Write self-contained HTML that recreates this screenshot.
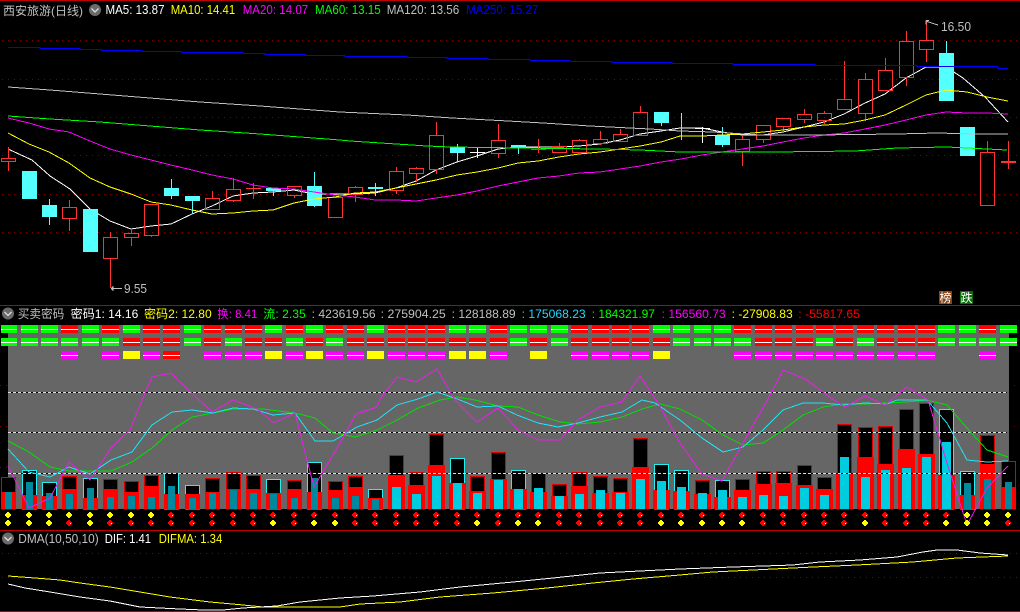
<!DOCTYPE html>
<html lang="zh">
<head>
<meta charset="utf-8">
<title>西安旅游(日线)</title>
<style>
html,body{margin:0;padding:0;background:#000}
svg{display:block}
text{font-family:"Liberation Sans","Noto Sans CJK SC",sans-serif;font-size:12.5px}
.c{font-size:12px}
.s{shape-rendering:crispEdges;fill:none}
</style>
</head>
<body>
<svg width="1020" height="612" viewBox="0 0 1020 612" xmlns="http://www.w3.org/2000/svg">
<defs>
<g id="r" style="shape-rendering:crispEdges"><path fill="#f00" d="M-1-3h2v1h1v1h1v2h-1v1h-1v1h-2v-1h-1v-1h-1v-2h1v-1h1z"/><rect x="1" y="0" width="1" height="1" fill="#fff"/></g>
<path id="y" style="shape-rendering:crispEdges" fill="#ff0" d="M-1-3h2v1h1v1h1v2h-1v1h-1v1h-2v-1h-1v-1h-1v-2h1v-1h1z"/>
</defs>
<rect width="1020" height="612" fill="#000"/>

<!-- separators -->
<g class="s" stroke="#c00000">
<path d="M0 .5h1020M0 305.5h1020M0 530.5h1020M0 611.5h1020"/>
</g>

<!-- main grid -->
<g class="s" stroke="#860000" stroke-dasharray="1 5">
<path d="M2 40.5H1020M2 79.5H1020M2 117.5H1020M2 155.5H1020M2 194.5H1020M2 232.5H1020"/>
<path d="M0 385.5H1020M0 426.5H1020M0 467.5H1020M2 553.5H1020M2 577.5H1020"/>
</g>

<!-- MA5 behind candles -->
<polyline class="s" stroke="#fff" points="8,149 32,160 50,176 70,189 90,209 110,221 131,229 151,226 171,224 192,214 212,206 233,196 253,193 273,192 294,190 314,194 340,194 355,194 375,193 396,188 416,181 436,170 457,162 477,156 498,149 518,147 538,147 559,147 579,146 600,144 620,140 640,134 661,131 680,128 702,128 722,132 742,135 763,135 783,132 804,127 824,122 844,114 865,103 885,94 906,78 926,67 946,67 963,78 985,97 1008,122"/>

<!-- candles -->
<path class="s" stroke="#ff3232" d="M1.5 158.5h14v3h-14zM8.5 147V158M8.5 162V171M62.5 207.5h14v11h-14zM69.5 200V207M69.5 219V231M103.5 237.5h14v21h-14zM110.5 232V237M110.5 259V288M124.5 233.5h14v4h-14zM131.5 228V233M131.5 238V246M144.5 204.5h14v31h-14zM151.5 236V237M205.5 198.5h14v11h-14zM212.5 191V198M226.5 189.5h14v11h-14zM233.5 178V189M233.5 201V202M287.5 186.5h14v9h-14zM294.5 196V198M328.5 197.5h14v20h-14zM348.5 187.5h14v7h-14zM355.5 186V187M355.5 195V202M389.5 171.5h14v19h-14zM396.5 167V171M396.5 191V194M409.5 168.5h14v5h-14zM416.5 167V168M416.5 174V182M429.5 135.5h14v34h-14zM436.5 122V135M436.5 170V174M491.5 140.5h14v13h-14zM498.5 124V140M498.5 154V158M552.5 146.5h14v6h-14zM559.5 143V146M572.5 140.5h14v12h-14zM579.5 139V140M593.5 139.5h14v4h-14zM600.5 131V139M600.5 144V145M613.5 134.5h14v7h-14zM620.5 129V134M633.5 112.5h14v23h-14zM640.5 106V112M735.5 139.5h14v12h-14zM742.5 135V139M742.5 152V166M756.5 125.5h14v14h-14zM763.5 140V143M776.5 118.5h14v8h-14zM783.5 127V132M797.5 114.5h14v5h-14zM804.5 109V114M804.5 120V123M817.5 113.5h14v7h-14zM824.5 111V113M824.5 121V124M837.5 99.5h14v10h-14zM844.5 61V99M858.5 79.5h14v34h-14zM865.5 73V79M865.5 114V121M878.5 70.5h14v20h-14zM885.5 58V70M899.5 41.5h14v36h-14zM906.5 31V41M906.5 78V86M919.5 40.5h14v9h-14zM926.5 21V40M926.5 50V62M980.5 152.5h14v53h-14zM987.5 141V152M246 188.5h15M253.5 183V199M531 149.5h15M538.5 139V153M1001 161.5h15M1001 162.5h15M1008.5 141V169"/>
<path class="s" stroke="#54ffff" d="M49.5 199V225M171.5 179V199M192.5 196V214M273.5 188V196M314.5 172V207M375.5 183V196M457.5 144V161M518.5 145V154M661.5 112V126M681.5 113V140M722.5 127V147M946.5 41V53"/>
<path style="shape-rendering:crispEdges" fill="#54ffff" d="M22 171h15v28h-15zM42 205h15v12h-15zM83 209h15v43h-15zM164 188h15v8h-15zM185 196h15v5h-15zM266 188h15v3h-15zM307 186h15v20h-15zM368 187h15v2h-15zM450 147h15v6h-15zM511 145h15v3h-15zM654 112h15v11h-15zM715 135h15v10h-15zM939 53h15v48h-15zM960 127h15v29h-15z"/>
<path class="s" stroke="#fff" d="M470 152.5h15M477.5 148V158M695 128.5h15M702.5 127V143"/>

<!-- other MAs -->
<g class="s">
<polyline stroke="#ff0" points="8,133 29,144 49,152 69,163 90,178 110,187 131,194 151,202 171,205 192,210 212,214 233,213 253,211 273,210 294,203 314,199 335,197 355,193 375,192 396,188 416,184 436,180 457,175 477,172 498,168 518,163 538,161 559,157 579,154 600,152 620,149 640,146 661,142 680,136 702,136 722,135 742,134 763,132 783,130 804,127 824,125 844,124 865,120 885,115 906,105 926,95 946,90 967,92 987,97 1008,101"/>
<polyline stroke="#f0f" points="8,118 29,123 49,129 69,132 90,141 110,149 131,155 151,160 171,165 192,170 212,175 233,179 253,185 273,188 294,189 314,192 335,195 355,197 375,200 396,200 416,201 436,198 457,195 477,191 498,186 518,182 538,178 559,176 579,173 600,172 620,169 640,166 661,162 681,159 702,155 722,152 742,149 763,146 783,142 804,138 824,135 844,133 865,129 885,125 906,120 926,115 946,112 967,113 987,113 1008,114"/>
<polyline stroke="#0f0" points="8,116 50,119 100,122 150,126 200,130 260,134 340,140 350,141 427,146 450,147 520,148 600,149 640,150 680,152 713,152 773,152 855,151 897,148 947,147 1007,150"/>
<polyline stroke="#c0c0c0" points="8,87 50,90 100,94 150,98 200,102 260,106 340,112 407,115 452,118 508,121 543,123 590,126 650,129 680,131 713,132 760,135 815,135 897,134 937,133 977,134 1008,134"/>
<path stroke="#00f" d="M8 47.5H40V48.5H80V49.5H102V50.5H142V51.5H182V52.5H243V53.5H265V54.5H305V55.5H345V56.5H407V57.5H447V58.5H488V59.5H530V60.5H570V61.5H612V62.5H672V63.5H733V64.5H815V65.5H917V66.5H998V68.5H1008"/>
</g>

<!-- price labels -->
<path class="s" stroke="#c0c0c0" d="M926 20.5h3M926 20.5v4M927 21.5L938 25M111 288.5H122M113 286v5M112 287v3"/>
<text x="941" y="31" textLength="30" lengthAdjust="spacingAndGlyphs" fill="#c0c0c0">16.50</text>
<text x="124" y="293" textLength="23" lengthAdjust="spacingAndGlyphs" fill="#c0c0c0">9.55</text>

<!-- main header -->
<text class="c" x="3" y="15" textLength="80" lengthAdjust="spacingAndGlyphs" fill="#c0c0c0">西安旅游(日线)</text>
<circle cx="95" cy="10" r="6" fill="#6a6a6a"/><path d="M91.5 8.5L95 12L98.5 8.5" stroke="#ddd" stroke-width="1.3" fill="none"/>
<text x="105.5" y="14" textLength="59" lengthAdjust="spacingAndGlyphs" fill="#fff">MA5: 13.87</text>
<text x="170.7" y="14" textLength="64.5" lengthAdjust="spacingAndGlyphs" fill="#ff0">MA10: 14.41</text>
<text x="242.7" y="14" textLength="65.5" lengthAdjust="spacingAndGlyphs" fill="#f0f">MA20: 14.07</text>
<text x="315" y="14" textLength="65.7" lengthAdjust="spacingAndGlyphs" fill="#0f0">MA60: 13.15</text>
<text x="386.7" y="14" textLength="72.6" lengthAdjust="spacingAndGlyphs" fill="#c0c0c0">MA120: 13.56</text>
<text x="466" y="14" textLength="72.3" lengthAdjust="spacingAndGlyphs" fill="#00f">MA250: 15.27</text>

<!-- badges -->
<rect x="939" y="291" width="13" height="13" fill="#8b4513"/>
<rect x="960" y="291" width="13" height="13" fill="#0b6b0b"/>
<text class="c" x="939.5" y="302" textLength="12" lengthAdjust="spacingAndGlyphs" fill="#fff">榜</text>
<text class="c" x="960.5" y="302" textLength="12" lengthAdjust="spacingAndGlyphs" fill="#fff">跌</text>

<!-- panel 2 header -->
<circle cx="8" cy="313.5" r="6" fill="#6a6a6a"/><path d="M4.5 312L8 315.5L11.5 312" stroke="#ddd" stroke-width="1.3" fill="none"/>
<text class="c" x="17.7" y="318" textLength="46.6" lengthAdjust="spacingAndGlyphs" fill="#c0c0c0">买卖密码</text>
<text class="c" x="70.7" y="318" textLength="67.6" lengthAdjust="spacingAndGlyphs" fill="#fff">密码1: 14.16</text>
<text class="c" x="144" y="318" textLength="67.7" lengthAdjust="spacingAndGlyphs" fill="#ff0">密码2: 12.80</text>
<text class="c" x="217.3" y="318" textLength="40" lengthAdjust="spacingAndGlyphs" fill="#f0f">换: 8.41</text>
<text class="c" x="263.3" y="318" textLength="42.4" lengthAdjust="spacingAndGlyphs" fill="#0f0">流: 2.35</text>
<text class="c" x="311.7" y="318" textLength="64" lengthAdjust="spacingAndGlyphs" fill="#c0c0c0">: 423619.56</text>
<text class="c" x="380.7" y="318" textLength="65" lengthAdjust="spacingAndGlyphs" fill="#c0c0c0">: 275904.25</text>
<text class="c" x="451.7" y="318" textLength="64" lengthAdjust="spacingAndGlyphs" fill="#c0c0c0">: 128188.89</text>
<text class="c" x="521.7" y="318" textLength="64" lengthAdjust="spacingAndGlyphs" fill="#22d8ff">: 175068.23</text>
<text class="c" x="591.7" y="318" textLength="63.3" lengthAdjust="spacingAndGlyphs" fill="#0f0">: 184321.97</text>
<text class="c" x="661.7" y="318" textLength="64" lengthAdjust="spacingAndGlyphs" fill="#f0f">: 156560.73</text>
<text class="c" x="731.7" y="318" textLength="61" lengthAdjust="spacingAndGlyphs" fill="#ff0">: -27908.83</text>
<text class="c" x="798.3" y="318" textLength="61.7" lengthAdjust="spacingAndGlyphs" fill="#f00">: -55817.65</text>

<!-- panel 2 -->
<rect x="8" y="325" width="1001" height="184" fill="#666" style="shape-rendering:crispEdges"/>

<!-- signal rows -->
<g class="s" stroke-width="8">
<path stroke="#f00" d="M61 329h17M102 329h17M143 329h17M163 329h17M204 329h17M225 329h17M245 329h17M286 329h17M326 329h17M347 329h17M388 329h17M408 329h17M428 329h17M490 329h17M571 329h17M592 329h17M612 329h17M632 329h17M734 329h17M755 329h17M775 329h17M796 329h17M816 329h17M836 329h17M857 329h17M877 329h17M898 329h17M918 329h17M979 329h17M123 342h17M143 342h17M163 342h17M204 342h17M245 342h17M265 342h17M306 342h17M347 342h17M367 342h17M388 342h17M408 342h17M428 342h17M449 342h17M469 342h17M490 342h17M530 342h17M571 342h17M592 342h17M612 342h17M632 342h17M653 342h17M755 342h17M775 342h17M796 342h17M836 342h17M877 342h17M898 342h17M918 342h17M163 355h17"/>
<path stroke="#0f0" d="M1 329h16M21 329h17M41 329h17M82 329h17M123 329h17M184 329h17M265 329h17M306 329h17M367 329h17M449 329h17M469 329h17M510 329h17M530 329h17M551 329h17M653 329h17M673 329h17M694 329h17M714 329h17M938 329h17M959 329h17M1000 329h17M1 342h16M21 342h17M41 342h17M61 342h17M82 342h17M102 342h17M184 342h17M225 342h17M286 342h17M326 342h17M510 342h17M551 342h17M673 342h17M694 342h17M714 342h17M734 342h17M816 342h17M857 342h17M938 342h17M959 342h17M979 342h17M1000 342h17"/>
<path stroke="#f0f" d="M61 355h17M102 355h17M143 355h17M204 355h17M225 355h17M245 355h17M286 355h17M326 355h17M347 355h17M388 355h17M408 355h17M428 355h17M490 355h17M571 355h17M592 355h17M612 355h17M632 355h17M734 355h17M755 355h17M775 355h17M796 355h17M816 355h17M836 355h17M857 355h17M877 355h17M898 355h17M918 355h17M979 355h17"/>
<path stroke="#ff0" d="M123 355h17M265 355h17M306 355h17M367 355h17M449 355h17M469 355h17M530 355h17M653 355h17"/>
</g>
<g class="s" stroke="#fff">
<path id="w" d="M1 329.5h16M21 329.5h17M41 329.5h17M61 329.5h17M82 329.5h17M102 329.5h17M123 329.5h17M143 329.5h17M163 329.5h17M184 329.5h17M204 329.5h17M225 329.5h17M245 329.5h17M265 329.5h17M286 329.5h17M306 329.5h17M326 329.5h17M347 329.5h17M367 329.5h17M388 329.5h17M408 329.5h17M428 329.5h17M449 329.5h17M469 329.5h17M490 329.5h17M510 329.5h17M530 329.5h17M551 329.5h17M571 329.5h17M592 329.5h17M612 329.5h17M632 329.5h17M653 329.5h17M673 329.5h17M694 329.5h17M714 329.5h17M734 329.5h17M755 329.5h17M775 329.5h17M796 329.5h17M816 329.5h17M836 329.5h17M857 329.5h17M877 329.5h17M898 329.5h17M918 329.5h17M938 329.5h17M959 329.5h17M979 329.5h17M1000 329.5h17"/>
<use href="#w" y="13"/>
<path d="M61 355.5h17M102 355.5h17M143 355.5h17M163 355.5h17M204 355.5h17M225 355.5h17M245 355.5h17M286 355.5h17M326 355.5h17M347 355.5h17M388 355.5h17M408 355.5h17M428 355.5h17M490 355.5h17M571 355.5h17M592 355.5h17M612 355.5h17M632 355.5h17M734 355.5h17M755 355.5h17M775 355.5h17M796 355.5h17M816 355.5h17M836 355.5h17M857 355.5h17M877 355.5h17M898 355.5h17M918 355.5h17M979 355.5h17"/>
</g>

<!-- volume boxes -->
<path style="shape-rendering:crispEdges" fill="#000" stroke="#e00000" d="M1.5 477.5h14V509h-14zM62.5 476.5h14V509h-14zM103.5 479.5h14V509h-14zM124.5 481.5h14V509h-14zM144.5 475.5h14V509h-14zM205.5 478.5h14V509h-14zM226.5 472.5h14V509h-14zM246.5 475.5h14V509h-14zM287.5 480.5h14V509h-14zM328.5 481.5h14V509h-14zM348.5 476.5h14V509h-14zM389.5 455.5h14V509h-14zM409.5 472.5h14V509h-14zM429.5 434.5h14V509h-14zM470.5 476.5h14V509h-14zM491.5 452.5h14V509h-14zM531.5 473.5h14V509h-14zM552.5 484.5h14V509h-14zM572.5 472.5h14V509h-14zM593.5 476.5h14V509h-14zM613.5 478.5h14V509h-14zM633.5 438.5h14V509h-14zM695.5 480.5h14V509h-14zM735.5 479.5h14V509h-14zM756.5 471.5h14V509h-14zM776.5 471.5h14V509h-14zM797.5 465.5h14V509h-14zM817.5 477.5h14V509h-14zM837.5 424.5h14V509h-14zM858.5 427.5h14V509h-14zM878.5 426.5h14V509h-14zM899.5 409.5h14V509h-14zM919.5 403.5h14V509h-14zM980.5 435.5h14V509h-14zM1001.5 461.5h14V509h-14z"/>
<path style="shape-rendering:crispEdges" fill="#000" stroke="#22f0f0" d="M22.5 470.5h14V509h-14zM42.5 482.5h14V509h-14zM83.5 478.5h14V509h-14zM164.5 473.5h14V509h-14zM185.5 485.5h14V509h-14zM266.5 479.5h14V509h-14zM307.5 462.5h14V509h-14zM368.5 489.5h14V509h-14zM450.5 458.5h14V509h-14zM511.5 470.5h14V509h-14zM654.5 464.5h14V509h-14zM674.5 470.5h14V509h-14zM715.5 480.5h14V509h-14zM939.5 409.5h14V509h-14zM960.5 471.5h14V509h-14z"/>
<!-- red volume fills -->
<path style="shape-rendering:crispEdges" fill="#f00" d="M1 492h15V509h-15zM22 495h15V509h-15zM42 496h15V509h-15zM62 489h15V509h-15zM83 498h15V509h-15zM103 489h15V509h-15zM124 492h15V509h-15zM144 486h15V509h-15zM164 494h15V509h-15zM185 494h15V509h-15zM205 492h15V509h-15zM226 489h15V509h-15zM246 489h15V509h-15zM266 493h15V509h-15zM287 489h15V509h-15zM307 492h15V509h-15zM328 490h15V509h-15zM348 487h15V509h-15zM368 498h15V509h-15zM960 495h15V509h-15zM980 464h15V509h-15zM1001 487h15V509h-15zM388 475h17V509h-17zM408 485h17V509h-17zM428 465h17V509h-17zM449 483h17V509h-17zM469 491h17V509h-17zM490 479h17V509h-17zM510 489h17V509h-17zM530 492h17V509h-17zM551 496h17V509h-17zM571 486h17V509h-17zM592 493h17V509h-17zM612 492h17V509h-17zM632 467h17V509h-17zM653 490h17V509h-17zM673 491h17V509h-17zM694 494h17V509h-17zM714 497h17V509h-17zM734 490h17V509h-17zM755 484h17V509h-17zM775 483h17V509h-17zM796 485h17V509h-17zM816 489h17V509h-17zM836 474h17V509h-17zM857 457h17V509h-17zM877 464h17V509h-17zM898 449h17V509h-17zM918 454h17V509h-17zM938 475h17V509h-17z"/>
<!-- inner volume bars -->
<path style="shape-rendering:crispEdges" fill="#00889c" d="M5 492h7V509h-7zM26 482h7V509h-7zM46 493h7V509h-7zM66 494h7V509h-7zM87 488h7V509h-7zM107 497h7V509h-7zM128 496h7V509h-7zM148 497h7V509h-7zM168 486h7V509h-7zM189 498h7V509h-7zM209 493h7V509h-7zM230 490h7V509h-7zM250 493h7V509h-7zM270 494h7V509h-7zM291 498h7V509h-7zM311 478h7V509h-7zM332 498h7V509h-7zM352 496h7V509h-7zM372 499h7V509h-7zM964 483h7V509h-7zM984 479h7V509h-7zM1005 482h7V509h-7z"/>
<path style="shape-rendering:crispEdges" fill="#00cce0" d="M392 487h9V509h-9zM412 494h9V509h-9zM432 476h9V509h-9zM453 483h9V509h-9zM473 493h9V509h-9zM494 480h9V509h-9zM514 489h9V509h-9zM534 488h9V509h-9zM555 496h9V509h-9zM575 494h9V509h-9zM596 490h9V509h-9zM616 493h9V509h-9zM636 479h9V509h-9zM657 481h9V509h-9zM677 487h9V509h-9zM698 493h9V509h-9zM718 490h9V509h-9zM738 497h9V509h-9zM759 495h9V509h-9zM779 496h9V509h-9zM800 488h9V509h-9zM820 495h9V509h-9zM840 457h9V509h-9zM861 477h9V509h-9zM881 470h9V509h-9zM902 468h9V509h-9zM922 457h9V509h-9zM942 442h9V509h-9z"/>

<!-- dashed levels -->
<path class="s" stroke="#000" d="M8 392.5H1007M8 432.5H1007M8 473.5H1007"/>
<path class="s" stroke="#ddd" stroke-dasharray="3 2" d="M8 392.5H1007M8 432.5H1007M8 473.5H1007"/>

<!-- panel 2 lines -->
<g class="s">
<polyline stroke="#00e000" points="8,441 29,452 50,467 69,471 90,471 111,471 132,462 152,448 172,430 192,417 213,413 233,409 263,409 295,413 315,418 333,433 340,434 355,437 377,430 397,420 418,408 440,400 457,397 475,400 498,406 518,407 538,415 560,422 578,424 600,422 622,417 642,409 660,404 680,409 702,420 723,435 743,445 763,443 783,430 803,415 823,407 843,404 865,404 887,403 907,402 927,400 947,405 967,428 987,450 1008,457"/>
<polyline stroke="#22e0f0" points="8,449 29,472 50,477 69,467 90,474 111,460 132,452 152,425 172,412 192,410 213,413 233,408 253,409 273,415 295,413 315,441 333,441 340,437 357,427 377,420 397,405 418,399 437,392 460,400 477,407 498,406 517,415 538,423 558,427 578,423 600,417 622,412 642,400 655,403 680,420 702,438 723,452 743,447 763,430 783,410 803,403 823,403 843,405 865,403 887,404 897,400 927,400 947,423 967,460 987,462 1008,461"/>
<polyline stroke="#e81ee8" points="8,466 29,508 50,498 69,462 90,480 111,448 130,430 143,398 152,377 171,373 198,399 212,412 233,400 257,409 274,423 295,413 314,487 340,443 356,414 377,407 380,399 397,377 416,382 437,369 455,400 477,422 498,408 518,430 538,440 560,440 578,420 600,407 622,402 640,376 658,403 680,443 702,474 722,481 743,443 768,399 783,370 805,379 834,400 845,407 865,396 885,405 907,387 928,400 947,463 967,525 987,488 1008,466"/>
</g>

<!-- dots -->
<g transform="translate(0,1)">
<use href="#y" x="8" y="514"/><use href="#y" x="29" y="514"/><use href="#y" x="49" y="514"/><use href="#y" x="69" y="514"/><use href="#y" x="90" y="514"/><use href="#y" x="110" y="514"/><use href="#y" x="131" y="514"/><use href="#y" x="151" y="514"/><use href="#y" x="967" y="514"/><use href="#y" x="987" y="514"/><use href="#y" x="1008" y="514"/>
<use href="#r" x="171" y="514"/><use href="#r" x="192" y="514"/><use href="#r" x="212" y="514"/><use href="#r" x="233" y="514"/><use href="#r" x="253" y="514"/><use href="#r" x="273" y="514"/><use href="#r" x="294" y="514"/><use href="#r" x="314" y="514"/><use href="#r" x="335" y="514"/><use href="#r" x="355" y="514"/><use href="#r" x="375" y="514"/><use href="#r" x="396" y="514"/><use href="#r" x="416" y="514"/><use href="#r" x="436" y="514"/><use href="#r" x="457" y="514"/><use href="#r" x="477" y="514"/><use href="#r" x="498" y="514"/><use href="#r" x="518" y="514"/><use href="#r" x="538" y="514"/><use href="#r" x="559" y="514"/><use href="#r" x="579" y="514"/><use href="#r" x="600" y="514"/><use href="#r" x="620" y="514"/><use href="#r" x="640" y="514"/><use href="#r" x="661" y="514"/><use href="#r" x="681" y="514"/><use href="#r" x="702" y="514"/><use href="#r" x="722" y="514"/><use href="#r" x="742" y="514"/><use href="#r" x="763" y="514"/><use href="#r" x="783" y="514"/><use href="#r" x="804" y="514"/><use href="#r" x="824" y="514"/><use href="#r" x="844" y="514"/><use href="#r" x="865" y="514"/><use href="#r" x="885" y="514"/><use href="#r" x="906" y="514"/><use href="#r" x="926" y="514"/><use href="#r" x="946" y="514"/>
<use href="#y" x="8" y="522"/><use href="#y" x="29" y="522"/><use href="#y" x="49" y="522"/><use href="#y" x="90" y="522"/><use href="#y" x="273" y="522"/><use href="#y" x="314" y="522"/><use href="#y" x="335" y="522"/><use href="#y" x="477" y="522"/><use href="#y" x="518" y="522"/><use href="#y" x="538" y="522"/><use href="#y" x="661" y="522"/><use href="#y" x="681" y="522"/><use href="#y" x="702" y="522"/><use href="#y" x="722" y="522"/><use href="#y" x="742" y="522"/><use href="#y" x="865" y="522"/><use href="#y" x="946" y="522"/><use href="#y" x="967" y="522"/><use href="#y" x="987" y="522"/>
<use href="#r" x="69" y="522"/><use href="#r" x="110" y="522"/><use href="#r" x="131" y="522"/><use href="#r" x="151" y="522"/><use href="#r" x="171" y="522"/><use href="#r" x="192" y="522"/><use href="#r" x="212" y="522"/><use href="#r" x="233" y="522"/><use href="#r" x="253" y="522"/><use href="#r" x="294" y="522"/><use href="#r" x="355" y="522"/><use href="#r" x="375" y="522"/><use href="#r" x="396" y="522"/><use href="#r" x="416" y="522"/><use href="#r" x="436" y="522"/><use href="#r" x="457" y="522"/><use href="#r" x="498" y="522"/><use href="#r" x="559" y="522"/><use href="#r" x="579" y="522"/><use href="#r" x="600" y="522"/><use href="#r" x="620" y="522"/><use href="#r" x="640" y="522"/><use href="#r" x="763" y="522"/><use href="#r" x="783" y="522"/><use href="#r" x="804" y="522"/><use href="#r" x="824" y="522"/><use href="#r" x="844" y="522"/><use href="#r" x="885" y="522"/><use href="#r" x="906" y="522"/><use href="#r" x="926" y="522"/><use href="#r" x="1008" y="522"/>
</g>

<!-- DMA panel -->
<circle cx="8" cy="538.5" r="6" fill="#6a6a6a"/><path d="M4.5 537L8 540.5L11.5 537" stroke="#ddd" stroke-width="1.3" fill="none"/>
<text x="18.3" y="543" textLength="80.4" lengthAdjust="spacingAndGlyphs" fill="#c0c0c0">DMA(10,50,10)</text>
<text x="104.7" y="543" textLength="46.3" lengthAdjust="spacingAndGlyphs" fill="#fff">DIF: 1.41</text>
<text x="158.7" y="543" textLength="63.6" lengthAdjust="spacingAndGlyphs" fill="#ff0">DIFMA: 1.34</text>
<g class="s">
<polyline stroke="#ff0" points="8,576 35,578 60,580 80,583 110,587 140,592 170,597 210,602 243,605 263,607 340,607 360,604 400,602 440,597 493,593 547,588 593,583 633,579 680,575 713,572 753,570 813,567 857,565 913,562 957,558 1008,556"/>
<polyline stroke="#fff" points="8,584 25,588 50,592 80,597 110,601 140,607 180,609 203,610 223,610 243,608 277,606 300,602 340,598 373,596 420,592 460,587 513,582 553,578 600,573 640,571 680,569 733,567 793,565 820,562 860,560 897,557 923,552 937,550 957,550 980,553 1008,555"/>
</g>
</svg>
</body>
</html>
